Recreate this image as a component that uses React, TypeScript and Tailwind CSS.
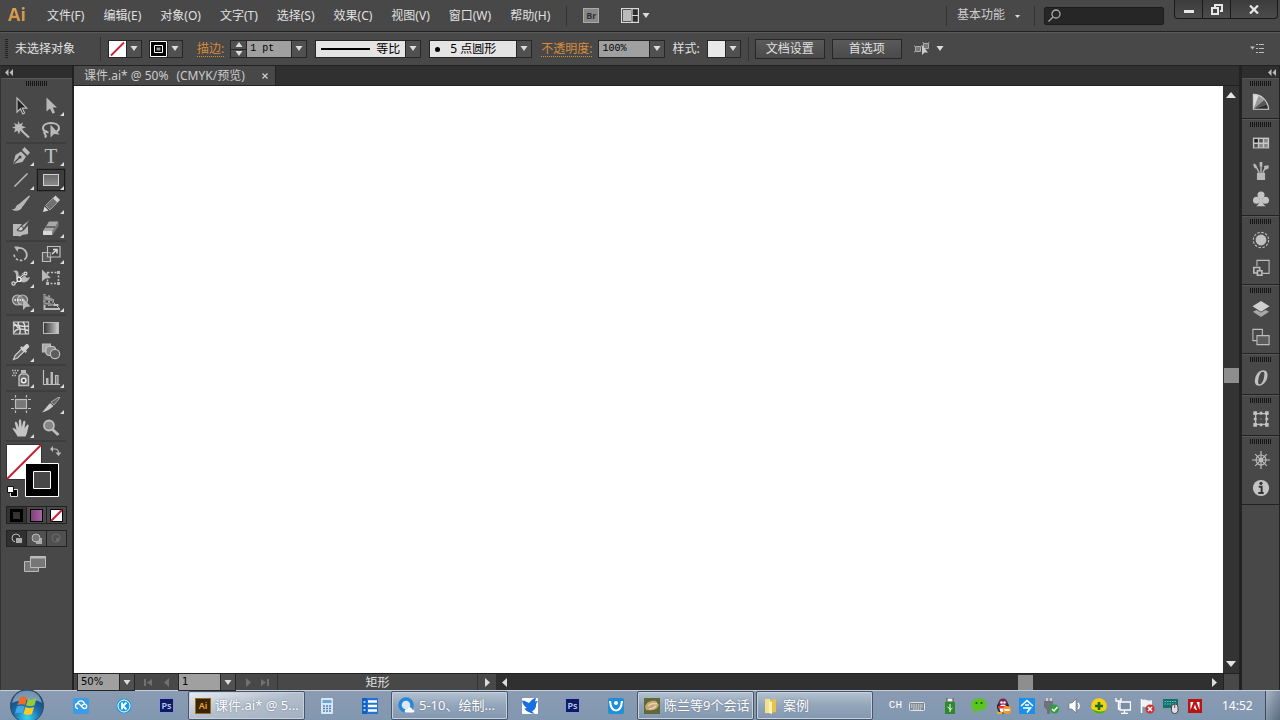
import React from 'react';

const MENUS = ['文件(F)', '编辑(E)', '对象(O)', '文字(T)', '选择(S)', '效果(C)', '视图(V)', '窗口(W)', '帮助(H)'];

const Svg: React.FC<{ children: React.ReactNode; size?: number }> = ({ children, size = 20 }) => (
  <svg width={size} height={size} viewBox="0 0 20 20" fill="none" stroke="#bdbdbd" strokeWidth="1.2" className="shrink-0">
    {children}
  </svg>
);

const G = '#b8b8b8';

const ICONS: Record<string, React.ReactNode> = {
  select: <path d="M6 2v14l3.4-3.2 2.4 5.2 1.8-.9-2.3-4.9h4.4z" fill="#222" />,
  direct: <path d="M5.500 1.500v14l3.500-3 2.500 5.200 2.500-1.200-2.300-5H16z" fill={G} stroke="none" />,
  wand: (
    <g>
      <path d="M7.500 1l1.200 3.300L12 2.500l-1.200 3.300 4.200 1.400-4 1.500 2 3.300-3.700-1.500L8 14.500l-1.600-3.800L3 12.500l1.400-3.700L1 7.500l3.500-1.300L3 3l3.500 1.400z" fill={G} stroke="none" />
      <path d="M10.500 10.500l7.500 7" strokeWidth="2" />
    </g>
  ),
  lasso: (
    <g>
      <path d="M7.500 12.500C4 12 2 10.500 2 8c0-3 3.500-5 8-5s8 2 8 5c0 1.500-1 3-2.500 3.500M6 11.500c-2-.5-3.500.5-2.500 2s2.500 2 .5 4" strokeWidth="2" />
      <path d="M9.500 4.500v13l3.500-3.500 5.500.5z" fill={G} stroke="none" />
    </g>
  ),
  pen: (
    <g>
      <path d="M2 18l2.500-9 5.500-3.500 5 5L11.500 16z" fill={G} stroke="none" />
      <path d="M11 4l5.500 5.500 2.500-3L13.500 1z" fill={G} stroke="none" />
      <path d="M2.500 17.500l6-6" stroke="#444" />
      <circle cx="9" cy="11" r="1.600" fill="#444" stroke="none" />
    </g>
  ),
  line: <path d="M3.500 16.500l13-13" strokeWidth="1.500" />,
  brush: (
    <g>
      <path d="M18.500 2L11.500 12l-2.500-2z" fill={G} stroke={G} />
      <path d="M9 10c2.500.8 3 3 1 5-2.500 2.500-6.500 2-9.500.5 3-.2 3.500-1 4.500-2.800C6 10.500 7.500 9.800 9 10z" fill={G} stroke="none" />
    </g>
  ),
  pencil: (
    <g>
      <path d="M2 18l1.500-5.500 4 4z" fill="#ddd" stroke="none" />
      <path d="M4.500 11.500l7.500-7.500 4.500 4.500-7.500 7.500z" fill="#707070" stroke="#a0a0a0" strokeWidth="1" />
      <path d="M12 4l2.500-2.500 4.500 4.500-2.500 2.500z" fill="#d0d0d0" stroke="none" />
    </g>
  ),
  blob: (
    <g>
      <path d="M2 6h9l-2 2.500L5.500 12c2 2.500 6.500 2 8.500-1l3-3.500V16l-6 1-1.500 1.500L7 18H2z" fill={G} stroke="none" />
      <path d="M19 1.500L13 10l-2.500-2z" fill={G} stroke="#444" strokeWidth=".5" />
      <path d="M10.500 8.500c2 .7 2.200 2.500.7 3.700-1.500 1-3.200.7-4.700 0 2-.7 1.500-3.700 4-3.700z" fill="#d0d0d0" stroke="#444" strokeWidth=".6" />
    </g>
  ),
  eraser: (
    <g>
      <path d="M2 13l6-9.500h9.500L12 13z" fill="#a8a8a8" stroke="none" />
      <path d="M2 13h9.500v4H2z" fill="#d8d8d8" stroke="none" />
      <path d="M11.500 13l6-9.500V8l-6 9z" fill="#777" stroke="none" />
      <path d="M4.500 9h9.500" stroke="#555" strokeWidth="1.500" />
    </g>
  ),
  rotate: (
    <g>
      <path d="M6 4.500a7 7 0 019 9.500" strokeWidth="1.800" />
      <path d="M15 14A6.800 6.800 0 013 9" strokeDasharray="2.500 1.800" strokeWidth="1.700" />
      <path d="M3 2.500h5L6.500 8z" fill={G} stroke="none" />
    </g>
  ),
  scale: (
    <g>
      <path d="M1.500 8.500h8v9h-8z" fill="#5a5a5a" />
      <path d="M6.500 2.500h12.500v10.500H6.500z" fill="#484848" fillOpacity=".4" />
      <path d="M11 10l5-4.500M12 5.500h4v4" strokeWidth="1.500" stroke="#ddd" />
    </g>
  ),
  warp: (
    <g>
      <path d="M2 3c3.500-1.500 6 0 5.500 3.500-.3 2 2.500 1.500 3 0 .8-2.500 3.500-2.500 3.500 0 0 3 1.500 4 5 2.500-1.500 4.500-5.500 7-9 4.500-3.500-1-5.500-3-5-6.500C5.200 5 4 4 2 3z" fill={G} stroke="none" />
      <path d="M2.500 15.500C6 15 8 12 9 10s4-3.500 6-4.500" stroke="#333" strokeWidth="2" />
      <path d="M2.500 15.500C6 15 8 12 9 10s4-3.500 6-4.500" stroke="#e4e4e4" />
      <circle cx="2.500" cy="15.500" r="1.600" fill="#444" stroke="#ddd" />
      <circle cx="8" cy="11.500" r="2" fill="#444" stroke="#fff" />
      <circle cx="14.500" cy="5.500" r="1.400" fill="#444" stroke="#ddd" />
    </g>
  ),
  free: (
    <g>
      <path d="M6.500 4.500h11v11h-11z" strokeDasharray="2 1.500" strokeWidth="1.500" />
      <path d="M1 1.500v12l3.500-3 5.500-.5z" fill={G} stroke="none" />
      <path d="M16 3h3v3h-3zM16 14h3v3h-3zM5 14h3v3H5z" fill={G} stroke="none" />
    </g>
  ),
  shape: (
    <g>
      <circle cx="6.500" cy="8" r="5" fill="#707070" />
      <circle cx="11.500" cy="8" r="5" fill="#888" fillOpacity=".6" />
      <path d="M3.500 8h10" strokeDasharray="1.500 1" stroke="#fff" strokeWidth="1.500" />
      <path d="M12 6v12l3-3 4.500-.5z" fill={G} stroke="none" />
    </g>
  ),
  perspective: (
    <g>
      <path d="M3.500 2v15H19M8 3.500v9.500h9.500M12 7v3.500" strokeWidth="2" />
      <path d="M3 3l9 3.500v3L3 8zM3 10l9 1.500v2L3 12.500z" fill="#999" stroke="#555" strokeWidth=".6" />
      <path d="M13 11l5 5" strokeWidth="1" />
    </g>
  ),
  mesh: (
    <g>
      <rect x="2.500" y="4" width="15" height="12" fill="#555" />
      <path d="M2.500 8c4-3 7 2 15 0M3 14.500c3-5 8-4 14.500-2M7.500 4c-2 3 4 6 1 12M12 4c4 4 0 6 3 12M2.500 5l5 5" stroke="#ddd" strokeWidth="1.400" />
    </g>
  ),
  dropper: (
    <g>
      <path d="M2.500 17.500l1.500-4L10.500 7l2.500 2.500L6.500 16z" fill="#666" stroke="#ccc" />
      <path d="M9 5.500l5.500 5.500 1.500-1.500-1-1 3-3.200c1.200-1.500-1.800-4.300-3-3l-3.200 3-1-1z" fill="#cfcfcf" stroke="none" />
    </g>
  ),
  blend: (
    <g>
      <path d="M1.500 2h8v8h-8z" fill="#aaa" />
      <rect x="5" y="4.500" width="9.500" height="9" rx="3" fill="#888" stroke="#c4c4c4" />
      <circle cx="14" cy="12" r="4.700" fill="#5c5c5c" />
    </g>
  ),
  spray: (
    <g>
      <path d="M1 2.500h1.500m1 0h1.500m1 0h1.500M2 5h1.500m1 0h1.500M1 7.500h1.500m1 0h1.500" strokeWidth="1.300" />
      <path d="M10 2h5v3h-5z" fill={G} stroke="none" />
      <path d="M8 8l2-2h5.500l2 2v9.500H8z" fill="#666" strokeWidth="1.400" />
      <circle cx="12.700" cy="12.500" r="2.200" fill="#444" stroke="#eee" strokeWidth="1.500" />
    </g>
  ),
  graph: (
    <g>
      <path d="M2.500 2v14.500H19" />
      <path d="M5 10h2.500v6H5zM9.500 4H12v12H9.500z" fill={G} stroke="none" />
      <path d="M14.500 7.500H17V16h-2.500z" fill="#777" />
    </g>
  ),
  artboard: (
    <g>
      <rect x="4.500" y="5.500" width="11" height="9" fill="#777" />
      <path d="M4.500 1v2.500M15.500 1v2.500M4.500 16.500V19M15.500 16.500V19M0 5.500h3M17 5.500h3M0 14.500h3M17 14.500h3" />
    </g>
  ),
  slice: (
    <g>
      <path d="M1 18.500L9 9l3.500 3C9 15.500 5 17.500 1 18.500z" fill="#ccc" stroke="none" />
      <path d="M10 8l7-4.500h2L13 11z" fill="#666" stroke={G} strokeWidth=".8" />
    </g>
  ),
  hand: (
    <path d="M6.500 18.500c-1-3-3.500-5-5-8 .8-1.200 2.200-.5 4 1.500L3.800 5c0-1.600 1.800-1.600 2.300-.3L8 9.500 7.800 2.700c.2-1.600 2.200-1.600 2.400 0l.5 6.500 1.500-5.500c.5-1.500 2.300-1 2.200.5l-.9 6 2.200-3c.9-1.200 2.300-.4 1.900 1C16.500 11.500 16.500 15 14.500 18.500z" fill="#c4c4c4" stroke="none" />
  ),
  zoom: (
    <g>
      <circle cx="8" cy="7.500" r="5" fill="#858585" strokeWidth="1.800" />
      <path d="M11.500 11.500l6 5.500" strokeWidth="3" />
    </g>
  ),
};

const T_ICON = <span className="font-['Liberation_Serif',serif] text-[21px] leading-none text-[#c0c0c0]">T</span>;
const RECT_ICON = <span className="h-3 w-4 border border-[#d0d0d0] bg-gradient-to-b from-[#6a6a6a] to-[#8a8a8a]" />;
const GRADIENT_ICON = <span className="h-3 w-4 border border-[#bbb] bg-gradient-to-r from-[#3a3a3a] to-[#ccc]" />;

interface Tool {
  name: string;
  icon: React.ReactNode;
  more?: boolean;
  active?: boolean;
}

const tool = (name: string, key: string, more = true): Tool => ({ name, icon: <Svg>{ICONS[key]}</Svg>, more });

const TOOL_GROUPS: Tool[][] = [
  [tool('选择', 'select', false), tool('直接选择', 'direct'), tool('魔棒', 'wand', false), tool('套索', 'lasso', false)],
  [
    tool('钢笔', 'pen'),
    { name: '文字', icon: T_ICON, more: true },
    tool('直线段', 'line'),
    { name: '矩形', icon: RECT_ICON, more: true, active: true },
    tool('画笔', 'brush', false),
    tool('铅笔', 'pencil'),
    tool('斑点画笔', 'blob', false),
    tool('橡皮擦', 'eraser'),
  ],
  [tool('旋转', 'rotate'), tool('比例缩放', 'scale'), tool('变形', 'warp'), tool('自由变换', 'free', false), tool('形状生成器', 'shape'), tool('透视网格', 'perspective')],
  [tool('网格', 'mesh', false), { name: '渐变', icon: GRADIENT_ICON }, tool('吸管', 'dropper'), tool('混合', 'blend', false)],
  [tool('符号喷枪', 'spray'), tool('柱形图', 'graph')],
  [tool('画板', 'artboard', false), tool('切片', 'slice'), tool('抓手', 'hand'), tool('缩放', 'zoom', false)],
];

const PANEL_GROUPS: { name: string; icon: React.ReactNode }[][] = [
  [
    {
      name: '颜色',
      icon: (
        <g>
          <path d="M1.500 1.500C10 1.500 17.500 8 18.500 18h-17z" fill="#999" stroke="none" />
          <path d="M1.500 1.500l6 1L1.500 18z" fill="#ddd" stroke="none" />
          <path d="M18.500 18L17 12.500 1.500 18z" fill="#2c2c2c" stroke="none" />
          <path d="M17 12.500L14 7.500 1.500 18z" fill="#555" stroke="none" />
          <path d="M1.500 1.500C10 1.500 17.500 8 18.500 18h-17z" stroke="#d0d0d0" />
        </g>
      ),
    },
  ],
  [
    {
      name: '色板',
      icon: (
        <g>
          <path d="M1 4h18v12H1z" fill="#c8c8c8" stroke="none" />
          <path d="M2.500 5.500h4v4h-4z" fill="#222" stroke="none" />
          <path d="M8 5.500h4v4H8zM2.500 11h4v4h-4z" fill="#555" stroke="none" />
          <path d="M13.500 5.500h4v4h-4zM8 11h4v4H8zM13.500 11h4v4h-4z" fill="#888" stroke="none" />
        </g>
      ),
    },
    {
      name: '画笔',
      icon: (
        <g>
          <path d="M5.500 12h9v8h-9z" fill={G} stroke="none" />
          <path d="M8 12L4.500 5M10 12V3M12 12l3-6" strokeWidth="1.500" />
          <path d="M1.500 2c3.500 0 4.500 3 3.500 5.500-2.500 0-3.500-2.500-3.500-5.500zM8.500 0h3v5h-3zM13 4.500l5.500-1V7l-3.500 2z" fill={G} stroke="none" />
        </g>
      ),
    },
    {
      name: '符号',
      icon: (
        <g fill="#c4c4c4" stroke="none">
          <circle cx="10" cy="5.500" r="3.900" />
          <circle cx="5" cy="11.500" r="3.900" />
          <circle cx="15" cy="11.500" r="3.900" />
          <path d="M8.800 8h2.400c0 5 .8 8 4.300 10h-11c3.500-2 4.300-5 4.300-10z" />
        </g>
      ),
    },
  ],
  [
    {
      name: '外观',
      icon: (
        <g>
          <circle cx="10" cy="10" r="6" fill="#c0c0c0" stroke="none" />
          <circle cx="10" cy="10" r="8.500" strokeDasharray="2.800 1.650" />
        </g>
      ),
    },
    {
      name: '图形样式',
      icon: (
        <g>
          <path d="M5.500 8V1.500H19V16h-7" />
          <path d="M2 9.500h6.500v6H2z" strokeWidth="1.800" />
          <path d="M6 13h5v5H6z" fill="#484848" strokeWidth="1.800" />
        </g>
      ),
    },
  ],
  [
    {
      name: '图层',
      icon: (
        <g stroke="none">
          <path d="M1 13l4-2 5 3 5-3 4 2-9 6z" fill="#a8a8a8" />
          <path d="M10 1l9.500 6L10 13 .5 7z" fill="#d0d0d0" />
        </g>
      ),
    },
    {
      name: '画板',
      icon: (
        <g>
          <path d="M1 1.500h10.500V14H1z" />
          <path d="M5.500 8.500H19v10H5.500z" fill="#5c5c5c" />
        </g>
      ),
    },
  ],
  [
    {
      name: '描边',
      icon: (
        <g>
          <path d="M12.500 1.500c4 0 5.500 3.500 4.500 8s-4.500 9-9 9-5.500-3.500-4.500-8 4.500-9 9-9zm-.5 1.500c-2.500 0-4 4-4.700 7.500S6.500 17 8.500 17s4-3.500 4.700-7S14.500 3 12 3z" fill="#c0c0c0" fillRule="evenodd" stroke="none" />
        </g>
      ),
    },
  ],
  [
    {
      name: '变换',
      icon: (
        <g>
          <path d="M4 4h12v12H4z" strokeWidth="1.500" />
          <path d="M1.500 1.500h4v4h-4zM8.500 2h3v3h-3zM14.500 1.500h4v4h-4zM2 8.500h3v3H2zM15 8.500h3v3h-3zM1.500 14.500h4v4h-4zM8.500 15h3v3h-3zM14.500 14.500h4v4h-4zM9.500 9.500h1v1h-1z" fill="#c4c4c4" stroke="none" />
        </g>
      ),
    },
  ],
  [
    {
      name: '导航器',
      icon: (
        <g>
          <circle cx="10" cy="10" r="5.500" />
          <path d="M10 0v20M0 10h20M3.500 3.500l13 13M16.500 3.500l-13 13" strokeWidth="1.300" />
          <circle cx="10" cy="10" r="1.800" fill={G} />
        </g>
      ),
    },
    {
      name: '信息',
      icon: (
        <g>
          <circle cx="10" cy="10" r="9" fill="#c4c4c4" stroke="none" />
          <path d="M7.500 8.500h3.200V15M7 15.500h6" stroke="#333" strokeWidth="2.200" />
          <circle cx="10" cy="4.800" r="1.800" fill="#333" stroke="none" />
        </g>
      ),
    },
  ],
];

const Grip = () => (
  <span className="h-[5px] w-[21px] bg-[repeating-linear-gradient(90deg,#151515_0px,#151515_1px,#484848_1px,#484848_2px)]" />
);

const Down = ({ className = '' }: { className?: string }) => (
  <svg width="8" height="5" viewBox="0 0 8 5" className={`shrink-0 ${className}`}>
    <path d="M0.500 0h7L4 5z" fill="#dcdcdc" />
  </svg>
);

const Collapse = () => (
  <svg width="8" height="7" viewBox="0 0 8 7" fill="#bbb">
    <path d="M3.500 0v7L0 3.500zM8 0v7L4.500 3.500z" />
  </svg>
);

const Side = ({ flip = false, bar = false, color = '#dcdcdc' }: { flip?: boolean; bar?: boolean; color?: string }) => (
  <svg width="9" height="9" viewBox="0 0 9 9" fill={color} className={flip ? '-scale-x-100' : ''}>
    <path d={bar ? 'M0 1l5 3.500L0 8zM6 1h2v7H6z' : 'M2 0l5 4.500L2 9z'} />
  </svg>
);

interface ComboProps {
  label: string;
  value: string;
  className: string;
}

const Combo: React.FC<ComboProps> = ({ label, value, className }) => (
  <div className={`relative flex h-[18px] border border-[#262626] ${className}`}>
    <select aria-label={label} className="w-full appearance-none bg-transparent pl-[3px] leading-none outline-none">
      <option>{value}</option>
    </select>
    <span className="pointer-events-none absolute inset-y-0 right-0 flex w-[15px] items-center justify-center border-l border-[#262626] bg-[#505050]">
      <Down />
    </span>
  </div>
);

const Swatch: React.FC<{ label: string; children?: React.ReactNode }> = ({ label, children }) => (
  <button aria-label={label} className="flex h-[18px] w-[34px] border border-[#262626]">
    <span className="flex h-4 w-[17px] items-center justify-center bg-[#e8e8e8]">{children}</span>
    <span className="flex h-4 w-[15px] items-center justify-center border-l border-[#262626] bg-[#505050]">
      <Down />
    </span>
  </button>
);

const MenuBar = () => (
  <header className="flex h-8 shrink-0 items-center border-b border-[#222]">
    <span className="ml-2 w-[39px] bg-gradient-to-b from-[#e0a55a] to-[#c98a3a] bg-clip-text pb-1 font-['Open_Sans',sans-serif] text-[18px] font-bold leading-6 text-transparent">Ai</span>
    <nav className="flex gap-[19px]">
      {MENUS.map((m) => (
        <button key={m} className="whitespace-nowrap">{m}</button>
      ))}
    </nav>
    <span className="ml-4 h-5 w-px bg-[#333]" />
    <button className="ml-4 flex h-[15px] w-4 items-center justify-center border border-[#aaa] bg-[#888] text-[9px] font-bold leading-none text-[#333]">Br</button>
    <button aria-label="排列文档" className="ml-[22px] flex items-center gap-[3px]">
      <svg width="18" height="15" viewBox="0 0 18 15" fill="#555" stroke="#d8d8d8" strokeWidth="1.200">
        <path d="M.6.600h16.800v13.800H.6z" fill="#2c2c2c" />
        <path d="M2 2h8v11H2z" fill="#bbb" stroke="none" />
        <path d="M11 1v13M11 7.500h6" />
      </svg>
      <Down />
    </button>
    <div className="ml-auto flex h-full items-center">
      <span className="h-5 w-px bg-[#333]" />
      <button className="ml-2.5 flex items-center gap-2.5 pb-0.5 text-[#ccc]">
        基本功能
        <svg width="5" height="3" viewBox="0 0 5 3" className="mt-1"><path d="M0 0h5L2.500 3z" fill="#ddd" /></svg>
      </button>
      <span className="ml-3.5 h-5 w-px bg-[#333]" />
      <div className="ml-[9px] flex h-[18px] w-[120px] items-center rounded-xs border border-[#1c1c1c] bg-[#262626] pl-[3px]">
        <svg width="13" height="13" viewBox="0 0 13 13" fill="none" stroke="#aaa" strokeWidth="1.300">
          <circle cx="8" cy="5" r="4" />
          <path d="M5 8l-4.500 4.500" />
        </svg>
        <input aria-label="搜索" className="w-24 bg-transparent outline-none" />
      </div>
      <div className="ml-2.5 mr-0.5 flex h-[19px] self-start rounded-b border border-t-0 border-[#1a1a1a] bg-gradient-to-b from-[#3c3c3c] to-[#4c4c4c]">
        <button aria-label="最小化" className="flex w-7 items-center justify-center border-r border-[#1a1a1a]">
          <span className="mt-1 h-[3px] w-2.5 bg-[#e6e6e6]" />
        </button>
        <button aria-label="还原" className="flex w-7 items-center justify-center border-r border-[#1a1a1a]">
          <svg width="12" height="11" viewBox="0 0 12 11" fill="none" stroke="#e6e6e6" strokeWidth="2">
            <path d="M4 3V1h7v6H9M1 4h6v6H1z" />
          </svg>
        </button>
        <button aria-label="关闭" className="flex w-[46px] items-center justify-center">
          <svg width="10" height="9" viewBox="0 0 10 9" stroke="#e6e6e6" strokeWidth="2.200"><path d="M1 .5l8 8M9 .5l-8 8" /></svg>
        </button>
      </div>
    </div>
  </header>
);

const LINK = 'border-b border-dotted border-[#d88c3a] leading-[15px] text-[#d88c3a]';

const OptionsBar = () => (
  <div className="flex h-[34px] shrink-0 items-center border-t border-b border-t-[#5a5a5a] border-b-[#222] pb-px whitespace-nowrap">
    <span className="ml-[5px] h-5 w-[3px] bg-[repeating-linear-gradient(180deg,#222_0px,#222_1px,#484848_1px,#484848_2px)]" />
    <span className="ml-[7px] w-[60px]">未选择对象</span>
    <span className="ml-[25px] h-6 w-px bg-[#333]" />
    <div className="ml-[7px] flex gap-[7px]">
      <Swatch label="填色">
        <svg width="17" height="16" viewBox="0 0 17 16"><path d="M0 0h17v16H0z" fill="#fff" /><path d="M2 14.500L15 1.500" stroke="#c8202f" strokeWidth="1.800" /></svg>
      </Swatch>
      <Swatch label="描边颜色">
        <svg width="17" height="16" viewBox="0 0 17 16" fill="none" stroke="#fff"><path d="M0 0h17v16H0z" fill="#000" stroke="none" /><path d="M.5.500h16v15H.5zM4.500 4.500h8v7h-8z" /><path d="M6.500 6.500h4v3h-4z" fill="#999" stroke="none" /></svg>
      </Swatch>
    </div>
    <a href="#stroke" className={`ml-3.5 ${LINK}`}>描边:</a>
    <div className="ml-1.5 flex">
      <div className="flex h-[18px] w-4 flex-col border border-r-0 border-[#262626] bg-[#505050]">
        <button aria-label="增加" className="flex h-2 items-center justify-center"><Down className="rotate-180" /></button>
        <button aria-label="减少" className="flex h-2 items-center justify-center border-t border-[#262626]"><Down /></button>
      </div>
      <Combo label="描边粗细" value="1 pt" className="w-[61px] bg-[#a0a0a0] font-['Liberation_Mono',monospace] text-[10px] text-black" />
    </div>
    <div className="relative ml-2">
      <Combo label="宽度配置文件" value="等比" className="w-[106px] bg-[#e4e4e4] pl-[57px] text-black" />
      <span className="pointer-events-none absolute left-1.5 top-2 h-0.5 w-[49px] bg-black" />
    </div>
    <div className="relative ml-2">
      <Combo label="画笔定义" value="5 点圆形" className="w-[103px] bg-[#e4e4e4] pl-[17px] text-black" />
      <span className="pointer-events-none absolute left-1.5 top-[7px] size-[5px] rounded-full bg-black" />
    </div>
    <a href="#opacity" className={`ml-[9px] ${LINK}`}>不透明度:</a>
    <Combo label="不透明度" value="100%" className="ml-1.5 w-[67px] bg-[#a0a0a0] font-['Liberation_Mono',monospace] text-[10px] text-black" />
    <span className="mx-[7px]">样式:</span>
    <Swatch label="样式" />
    <span className="ml-[7px] h-6 w-px bg-[#333]" />
    <button className="ml-1.5 h-5 w-[70px] border border-[#262626] bg-gradient-to-b from-[#5a5a5a] to-[#4a4a4a] leading-none">文档设置</button>
    <button className="ml-[7px] h-5 w-[70px] border border-[#262626] bg-gradient-to-b from-[#5a5a5a] to-[#4a4a4a] leading-none">首选项</button>
    <button aria-label="选择类似的对象" className="ml-3 flex items-center gap-1.5">
      <svg width="16" height="14" viewBox="0 0 16 14" fill="#777" stroke="#aaa">
        <path d="M1.500 4.500h5v5h-5zM9.500 1.500h5v5h-5z" />
        <path d="M0 4h1M0 10h1M7 4h1M9 0v1M15 0v1" />
        <path d="M8 3v10l2.500-2.500H14z" fill="#ccc" stroke="none" />
      </svg>
      <Down />
    </button>
    <button aria-label="面板菜单" className="ml-auto mr-4">
      <svg width="14" height="9" viewBox="0 0 14 9" fill="#bbb">
        <path d="M0 2.500h5L2.500 5.500zM6 0h2v1H6zM9 0h5v1H9zM6 4h2v1H6zM9 4h5v1H9zM6 8h2v1H6zM9 8h5v1H9z" />
      </svg>
    </button>
  </div>
);

const Toolbox = () => (
  <aside className="flex w-[74px] shrink-0 flex-col border-r-2 border-l border-r-[#222] border-l-[#333]">
    <div className="flex h-3 shrink-0 items-center bg-[#2e2e2e] pl-1"><Collapse /></div>
    <div className="flex h-4 items-start justify-center border-t border-[#5a5a5a] pt-0.5"><Grip /></div>
    <div className="pl-[5px] pr-1.5">
      {TOOL_GROUPS.map((group, i) => (
        <div key={i} className="grid grid-cols-2 border-b-2 border-[#3e3e3e]">
          {group.map((t) => (
            <button
              key={t.name}
              aria-label={t.name}
              className={`relative flex h-6 items-center justify-center ${t.active ? 'bg-[#3e3e3e] outline outline-1 -outline-offset-2 outline-[#1a1a1a]' : ''}`}
            >
              {t.icon}
              {t.more && (
                <svg width="4" height="4" viewBox="0 0 4 4" className="absolute bottom-0.5 right-0.5"><path d="M4 0v4H0z" fill="#ddd" /></svg>
              )}
            </button>
          ))}
        </div>
      ))}
      <div className="relative mt-0.5 h-[54px]">
        <button aria-label="填色" className="absolute left-0 top-0">
          <svg width="36" height="36" viewBox="0 0 36 36"><path d="M.5.500h35v35H.5z" fill="#fff" stroke="#333" /><path d="M1 35L35 1" stroke="#c8202f" strokeWidth="2" /></svg>
        </button>
        <button aria-label="描边" className="absolute left-[19px] top-[19px]">
          <svg width="34" height="34" viewBox="0 0 34 34"><path d="M.5.500h33v33H.5z" fill="#000" stroke="#fff" /><path d="M8.500 8.500h17v17h-17z" fill="#484848" stroke="#fff" /></svg>
        </button>
        <button aria-label="互换填色和描边" className="absolute left-11 top-0.5">
          <svg width="11" height="11" viewBox="0 0 11 11" fill="none" stroke="#bbb" strokeWidth="1.200"><path d="M2 3h3c2.500 0 3.500 1 3.500 4" /><path d="M3 0v6L0 3zM5.500 6.500h6L8.500 10z" fill="#bbb" stroke="none" /></svg>
        </button>
        <button aria-label="默认填色和描边" className="absolute left-px top-[42px]">
          <svg width="11" height="11" viewBox="0 0 11 11"><path d="M3.500 3.500h7v7h-7z" fill="#000" stroke="#ddd" /><path d="M.5.500h6v6h-6z" fill="#fff" stroke="#111" /></svg>
        </button>
      </div>
      <div className="-mr-px mt-2 flex h-[18px] border border-[#222]">
        <button aria-label="颜色" className="flex flex-1 items-center justify-center bg-[#333]"><span className="size-[13px] border-[3px] border-black bg-[#333]" /></button>
        <button aria-label="渐变" className="flex flex-1 items-center justify-center border-x border-[#222]"><span className="size-[13px] border border-black bg-gradient-to-r from-[#80407c] to-[#a866a4]" /></button>
        <button aria-label="无" className="flex flex-1 items-center justify-center">
          <svg width="13" height="13" viewBox="0 0 13 13"><path d="M.5.500h12v12H.5z" fill="#fff" stroke="#000" /><path d="M1 12L12 1" stroke="#c8202f" strokeWidth="2" /></svg>
        </button>
      </div>
      <div className="-mr-px mt-1.5 flex h-[17px] border border-[#222]">
        {['正常绘图', '背面绘图', '内部绘图'].map((n, i) => (
          <button key={n} aria-label={n} className={`flex flex-1 items-center justify-center ${i === 0 ? 'bg-[#303030]' : 'border-l border-[#222] bg-[#505050]'}`}>
            <svg width="12" height="12" viewBox="0 0 12 12" fill={i === 2 ? '#6a6a6a' : '#aaa'} stroke={i === 2 ? '#6a6a6a' : '#bbb'}>
              {i === 1 && <path d="M5 5h6v6H5z" stroke="none" />}
              <circle cx="5" cy="5" r="4" fill={i === 1 ? '#777' : 'none'} />
              {i === 0 && <path d="M4.500 4.500h7v6h-7z" stroke="#333" />}
              {i === 2 && <path d="M5 5h3v3H5z" stroke="none" />}
            </svg>
          </button>
        ))}
      </div>
      <button aria-label="更改屏幕模式" className="ml-[18px] mt-[9px]">
        <svg width="22" height="17" viewBox="0 0 22 17" fill="#777" stroke="#bbb"><path d="M.5 5.500h14v10H.5z" /><path d="M6.500.500h15v11h-15z" /><path d="M6 1.500h16" strokeWidth="2" /></svg>
      </button>
    </div>
  </aside>
);

const StatusBar = () => (
  <div className="flex h-[17px] min-w-0 flex-1 items-center border-t border-[#222]">
    <Combo label="缩放比例" value="50%" className="ml-[3px] h-4 w-[58px] bg-[#a0a0a0] font-['DejaVu_Sans',sans-serif] text-[10px] text-black" />
    <div className="flex w-[43px] items-center justify-center gap-2.5">
      <button aria-label="首个画板"><Side flip bar color="#707070" /></button>
      <button aria-label="上一个画板"><Side flip color="#707070" /></button>
    </div>
    <Combo label="画板导航" value="1" className="h-4 w-[58px] bg-[#a0a0a0] font-['DejaVu_Sans',sans-serif] text-[10px] text-black" />
    <div className="flex w-[41px] items-center justify-center gap-2">
      <button aria-label="下一个画板"><Side color="#707070" /></button>
      <button aria-label="末个画板"><Side bar color="#707070" /></button>
    </div>
    <span className="flex h-full w-[201px] items-center justify-center border-x border-[#333] pt-0.5 leading-none">矩形</span>
    <button aria-label="状态栏菜单" className="flex h-full w-[18px] items-center justify-center"><Side /></button>
    <div className="flex h-full flex-1 items-center bg-[#303030]">
      <button aria-label="向左滚动" className="flex w-[17px] justify-center"><Side flip /></button>
      <span className="grow-[505]" />
      <span className="h-[15px] w-[15px] bg-[#8e8e8e]" />
      <span className="grow-[173]" />
      <button aria-label="向右滚动" className="flex w-[17px] justify-center"><Side /></button>
    </div>
  </div>
);

const DocumentArea = () => (
  <section className="flex min-w-0 flex-1 flex-col bg-[#303030]">
    <div className="flex h-5 shrink-0 border-b border-[#222]">
      <div className="flex w-[202px] items-center justify-between border-r border-[#222] bg-[#484848] pl-2.5 pr-[7px] text-[#ccc]">
        <span className="flex gap-2 whitespace-nowrap leading-none">
          <span>课件.ai* @ 50%</span>
          <span>(CMYK/预览)</span>
        </span>
        <button aria-label="关闭文档">
          <svg width="6" height="6" viewBox="0 0 6 6" stroke="#ccc" strokeWidth="1.300"><path d="M.5.500l5 5M5.500.500l-5 5" /></svg>
        </button>
      </div>
    </div>
    <div className="flex min-h-0 flex-1">
      <main className="flex-1 bg-white" />
      <div className="flex w-4 flex-col items-center bg-[#333]">
        <button aria-label="向上滚动" className="flex h-[18px] items-center"><svg width="10" height="6" viewBox="0 0 10 6"><path d="M0 6h10L5 0z" fill="#e4e4e4" /></svg></button>
        <span className="grow-[264]" />
        <span className="h-[15px] w-[15px] bg-[#8e8e8e]" />
        <span className="grow-[272]" />
        <button aria-label="向下滚动" className="flex h-[18px] items-center"><svg width="10" height="6" viewBox="0 0 10 6"><path d="M0 0h10L5 6z" fill="#e4e4e4" /></svg></button>
      </div>
    </div>
    <div className="flex bg-[#484848]">
      <StatusBar />
      <span className="w-4 border-l border-t border-[#222]" />
    </div>
  </section>
);

const PanelDock = () => (
  <aside className="flex w-[41px] shrink-0 flex-col border-r border-l-[3px] border-[#222]">
    <div className="flex h-3 shrink-0 items-center justify-end bg-[#2e2e2e] pr-[3px]"><Collapse /></div>
    {PANEL_GROUPS.map((group, i) => (
      <div key={i} className="flex flex-col items-center border-b border-[#222] pb-0.5">
        <div className="flex h-2.5 w-full items-center justify-center border-t border-[#565656]"><Grip /></div>
        {group.map((p) => (
          <button key={p.name} aria-label={p.name} className="flex h-7 w-full items-center justify-center"><Svg size={18}>{p.icon}</Svg></button>
        ))}
      </div>
    ))}
  </aside>
);

const PinnedIcon: React.FC<{ label: string; children: React.ReactNode }> = ({ label, children }) => (
  <button aria-label={label} className="flex h-full w-[43px] shrink-0 items-center justify-center">{children}</button>
);

const TaskButton: React.FC<{ label: string; active?: boolean; children: React.ReactNode }> = ({ label, active, children }) => (
  <button
    className={`flex h-[29px] w-[117px] shrink-0 items-center gap-1 overflow-hidden rounded-xs border border-[#46566b] pl-1.5 text-[13px] whitespace-nowrap text-white shadow-[inset_0_0_0_1px_#c6d1dd] ${
      active ? 'bg-gradient-to-br from-[#e8ecf2] via-[#b4bfcd] to-[#a3afbf]' : 'bg-gradient-to-b from-[#b5c2d1] via-[#93a5b9] to-[#8298b0]'
    }`}
  >
    {children}
    <span className="[text-shadow:0_0_2px_#5f6f84]">{label}</span>
  </button>
);

const PsIcon = () => (
  <span className="flex size-[15px] items-center justify-center border border-[#7f93d8] bg-[#101a5e] text-[9px] font-semibold leading-none text-[#b8c8ff]">Ps</span>
);

const TRAY: { name: string; icon: React.ReactNode }[] = [
  { name: 'QQ', icon: <g><ellipse cx="8" cy="9" rx="6" ry="6.500" fill="#222" /><circle cx="8" cy="5" r="4.500" fill="#7a2450" /><ellipse cx="8" cy="10.500" rx="3.500" ry="4" fill="#fff" /><path d="M3 8h9l-1 2.500H3z" fill="#e8343a" /><circle cx="6.500" cy="4.500" r="1.300" fill="#fff" /><circle cx="9.500" cy="4.500" r="1.300" fill="#fff" /><path d="M2 14h5v2H2z" fill="#f5a623" /><circle cx="12" cy="12" r="4" fill="#f39a2b" /><path d="M9.500 11h5v2h-5z" fill="#fff" /></g> },
  { name: '今日', icon: <g><path d="M0 0h16v16H0z" fill="#1990ea" /><path d="M2 8l6-5.500L14 8M6 7h4M4 10h7.500L8 14.500" fill="none" stroke="#fff" strokeWidth="1.600" /></g> },
  { name: '安全删除硬件', icon: <g><path d="M3 0h2v3H3zM7 0h2v3H7z" fill="#ccc" /><path d="M1 3h9v6l-3 3v4H4v-4L1 9z" fill="#6d7278" /><circle cx="11.500" cy="11" r="4.500" fill="#2f9e3c" /><path d="M9 11l2 2 3.500-4" stroke="#fff" strokeWidth="1.500" fill="none" /></g> },
  { name: '音量', icon: <g><path d="M2 5h3l4-4v14l-4-4H2z" fill="#fff" stroke="#666" strokeWidth=".6" /><path d="M11 5c1.500 2 1.500 4 0 6" stroke="#fff" strokeWidth="1.500" fill="none" /></g> },
  { name: '安全卫士', icon: <g><circle cx="8" cy="8" r="7.800" fill="#f5d40a" /><path d="M1 11a8 8 0 0014 1C12 14 6 14 1 11z" fill="#3fae2a" /><path d="M8 4v8M4 8h8" stroke="#1b6b22" strokeWidth="2.600" /></g> },
  { name: '网络', icon: <g fill="none" stroke="#fff" strokeWidth="1.300"><path d="M5 4h10.500v8H5z" fill="#7b8da5" /><path d="M9.500 12v3M6 15.300h7M1 0v3h5V0M3.500 3v8h2" /></g> },
  { name: '操作中心', icon: <g><path d="M2.500 1v14" stroke="#fff" strokeWidth="1.500" /><path d="M3 2c4-2 5 2 10 0v7c-5 2-6-1-10 0z" fill="#eef2f6" /><circle cx="11" cy="11" r="4.500" fill="#d03030" /><path d="M9 9l4 4M13 9l-4 4" stroke="#fff" strokeWidth="1.500" /></g> },
  { name: '键盘鼠标', icon: <g><path d="M0 1h15v9H0z" fill="#176f6c" /><path d="M1.500 3.500h12M1.500 6h12" stroke="#58d3c5" strokeDasharray="1.500 1" /><rect x="8.500" y="6" width="6.500" height="9.500" rx="3" fill="#e0e0e0" stroke="#444" /><path d="M11.700 6v4" stroke="#555" /></g> },
  { name: 'Adobe', icon: <g><path d="M1 1h14v14H1z" fill="#b81414" /><path d="M3.500 12V4h3zM12.500 12V4h-3zM8 6.500l2 5.500H8.500L8 10.500H6.500z" fill="#fff" /></g> },
];

const Taskbar = () => (
  <footer className="flex h-[30px] shrink-0 items-center border-t border-[#c3cedb] bg-gradient-to-b from-[#8a9bb2] to-[#8197b0] font-['Noto_Sans','Noto_Sans_CJK_SC',sans-serif]">
    <button aria-label="开始" className="flex h-[29px] w-[59px] shrink-0 items-center justify-center pr-1.5">
      <svg width="34" height="34" viewBox="0 0 34 34" className="-my-1">
        <defs>
          <radialGradient id="orb" cx=".5" cy=".85" r=".8"><stop offset="0" stopColor="#38d4f5" /><stop offset=".5" stopColor="#1c6cab" /><stop offset="1" stopColor="#173c66" /></radialGradient>
        </defs>
        <circle cx="17" cy="17" r="16.500" fill="url(#orb)" stroke="#334e6c" />
        <path d="M2 14C4 5 10 1.500 17 1.500S30 5 32 14c-9-5-20-4-30 0z" fill="#d7e6f0" opacity=".5" />
        <path d="M10 8.500c2.500-1.500 5-1 7 .5l-2 7c-2-1-4.500-1.300-7.500 0z" fill="#f06a2a" />
        <path d="M18 9.500c2.500 1.300 5.500 1.200 8.500-.2l-2 7c-3 1.500-6 1.200-8.500 0z" fill="#97c93d" />
        <path d="M7 17.500c3-1.300 5.500-1 7.500 0L12.500 24.500c-2-1-4.500-1.200-7.500 0z" fill="#3fa9e8" />
        <path d="M15.500 18c2.500 1.300 5.500 1.300 8.500 0L22 25c-2.500 1.300-6 1.200-8.500 0z" fill="#fcc822" />
      </svg>
    </button>
    <PinnedIcon label="云盘">
      <svg width="16" height="16" viewBox="0 0 16 16"><rect width="16" height="16" rx="2" fill="#3a9be6" /><path d="M5 10.500a2.500 2.500 0 110-5c2.500 0 4 5 6.500 5a2.200 2.200 0 000-4.400c-1.500 0-2.200 1-3 2M4.500 5.500c1-3.500 6-3.500 7 .5" stroke="#fff" strokeWidth="1.300" fill="none" /></svg>
    </PinnedIcon>
    <PinnedIcon label="酷狗">
      <svg width="16" height="16" viewBox="0 0 16 16"><circle cx="8" cy="8" r="7.500" fill="#1b9be0" /><circle cx="8" cy="8" r="6" fill="none" stroke="#fff" /><path d="M6 4.500v7M10.500 4.500L7 8l3.500 3.500" stroke="#fff" strokeWidth="1.800" fill="none" /></svg>
    </PinnedIcon>
    <PinnedIcon label="Photoshop"><PsIcon /></PinnedIcon>
    <TaskButton label="课件.ai* @ 5..." active>
      <span className="flex size-4 items-center justify-center border border-[#9a6a1c] bg-[#3a2406] text-[9px] font-semibold leading-none text-[#f0a63a]">Ai</span>
    </TaskButton>
    <PinnedIcon label="计算器">
      <svg width="12" height="16" viewBox="0 0 12 16"><rect width="12" height="16" rx="1" fill="#d8e6f4" /><path d="M1.500 2h9v3h-9z" fill="#6fa6d8" /><path d="M2 8h8M2 10.500h8M2 13h8" stroke="#4a84bd" strokeWidth="1.500" strokeDasharray="2 1" /></svg>
    </PinnedIcon>
    <PinnedIcon label="列表">
      <svg width="16" height="16" viewBox="0 0 16 16"><path d="M0 0h5v16H0z" fill="#1460c0" /><path d="M5 0h11v16H5z" fill="#2274d4" /><path d="M6 3.500h9M6 8h9M6 12.500h9" stroke="#fff" strokeWidth="2.500" /><path d="M1.500 3h2v2h-2zM1.500 7h2v2h-2zM1.500 11h2v2h-2z" fill="#9cd0ff" /></svg>
    </PinnedIcon>
    <TaskButton label="5-10、绘制...">
      <svg width="17" height="17" viewBox="0 0 17 17"><circle cx="8" cy="8" r="6" fill="#dce9f5" stroke="#2887dc" strokeWidth="3.500" /><path d="M7 15.500c-1-3 1-4 2.500-3.500 1-3 5-2 4.500.5 3 0 3 3 1 3z" fill="#fff" /></svg>
    </TaskButton>
    <PinnedIcon label="迅雷">
      <svg width="16" height="16" viewBox="0 0 16 16"><rect width="16" height="16" rx="1" fill="#fff" /><path d="M0 2.500c3 0 5 1.500 7 2.500C9 2 12 0 14 0l-1 3.500 3-.5-2 3c.5 3-1 6-4 7.500l3 2.500C8 15 4 13.500 2.500 10.500L5 10C2.500 8.500.5 6 0 2.500z" fill="#1a6fe0" /></svg>
    </PinnedIcon>
    <PinnedIcon label="Photoshop 2"><PsIcon /></PinnedIcon>
    <PinnedIcon label="助手">
      <svg width="16" height="16" viewBox="0 0 16 16"><rect width="16" height="16" rx="2" fill="#1f8fd8" /><circle cx="8" cy="5" r="2" fill="#fff" /><path d="M2 3c.5 6 3 9.500 6 9.500S13.500 9 14 3" fill="none" stroke="#fff" strokeWidth="2.200" /></svg>
    </PinnedIcon>
    <TaskButton label="陈兰等9个会话">
      <svg width="16" height="16" viewBox="0 0 16 16"><path d="M0 0h16v16H0z" fill="#5f6a38" /><path d="M1 9c1-5 6-7 11-6l3 4c-2 5-7 6-13 5z" fill="#c7a678" /><path d="M4 8c3-3 6-3 9-2M5 11c3 0 5-1 7-3" stroke="#e8d2b0" strokeWidth="1.500" fill="none" /></svg>
    </TaskButton>
    <span className="w-0.5 shrink-0" />
    <TaskButton label="案例">
      <svg width="16" height="16" viewBox="0 0 16 16"><path d="M2 1h5v14H2z" fill="#f7e08a" /><path d="M7 2l6-1v13l-6 1z" fill="#e9c04a" /><path d="M6 3l3 1v12l-3-1z" fill="#fff3b8" /></svg>
    </TaskButton>
    <div className="ml-auto flex h-full shrink-0 items-center text-white">
      <span className="font-['Liberation_Mono',monospace] text-[11px]">CH</span>
      <svg width="16" height="10" viewBox="0 0 16 10" className="ml-[7px]"><rect x=".5" y="1.500" width="15" height="8" rx="1" fill="#7f8791" stroke="#e0e4e8" /><path d="M2 4h12M2 6h12M4 8h8" stroke="#eee" strokeDasharray="1.500 .8" /></svg>
      <svg width="12" height="16" viewBox="0 0 12 16" className="ml-[19px]"><path d="M3 0h6v4H3z" fill="#eee" stroke="#555" /><path d="M1 4h10v12H1z" fill="#2d8a2a" /><path d="M6 14V6M6 11L3.500 9M6 12l2.500-2" stroke="#fff" fill="none" /></svg>
      <svg width="16" height="15" viewBox="0 0 16 15" className="ml-[15px]"><ellipse cx="8" cy="6.500" rx="7.800" ry="6.500" fill="#5ac421" /><path d="M3 11l-1 4 5-2z" fill="#5ac421" /><circle cx="5.500" cy="5" r="1.100" fill="#1c5a10" /><circle cx="10.500" cy="5" r="1.100" fill="#1c5a10" /></svg>
      <div className="ml-2 flex gap-2">
        {TRAY.map((t) => (
          <button key={t.name} aria-label={t.name}><svg width="16" height="16" viewBox="0 0 16 16">{t.icon}</svg></button>
        ))}
      </div>
      <time className="ml-[19px] w-8 text-[12px]">14:52</time>
      <button aria-label="显示桌面" className="ml-[11px] h-full w-[15px] border-l border-[#3d4c60] bg-gradient-to-br from-[#a8b4c4] to-[#5c6c80]" />
    </div>
  </footer>
);

const App: React.FC = () => (
  <div className="flex h-screen flex-col overflow-hidden bg-[#484848] font-['Noto_Sans','Noto_Sans_CJK_SC',sans-serif] text-[12px] text-[#e0e0e0]">
    <MenuBar />
    <OptionsBar />
    <div className="flex min-h-0 flex-1">
      <Toolbox />
      <DocumentArea />
      <PanelDock />
    </div>
    <Taskbar />
  </div>
);

export default App;
